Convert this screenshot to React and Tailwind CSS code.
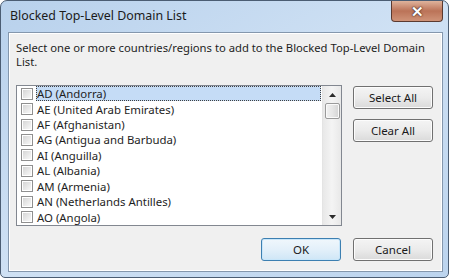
import React from "react";

const countries = [
  "AD (Andorra)",
  "AE (United Arab Emirates)",
  "AF (Afghanistan)",
  "AG (Antigua and Barbuda)",
  "AI (Anguilla)",
  "AL (Albania)",
  "AM (Armenia)",
  "AN (Netherlands Antilles)",
  "AO (Angola)",
];

const Checkbox = () => (
  <div className="w-[12px] h-[12px] border border-[#8f8f8f] bg-white p-[1px] shrink-0">
    <div className="w-full h-full bg-gradient-to-br from-[#d6d6d6] to-[#f8f8f8]" />
  </div>
);

const Button = ({ children, primary }) => (
  <button
    className={
      primary
        ? "w-[80px] h-[23px] rounded-[3px] border border-[#3c7fb1] bg-gradient-to-b from-[#f0f7fc] via-[#e3f0fa] to-[#cfe6f6] text-[11.5px] text-[#1a1a1a] shadow-[inset_0_0_0_1px_#c8e6fa]"
        : "w-[80px] h-[23px] rounded-[3px] border border-[#707070] bg-gradient-to-b from-[#f4f4f4] via-[#ebebeb] to-[#dadada] text-[11.5px] text-[#1a1a1a] shadow-[inset_0_0_0_1px_#fcfcfc]"
    }
  >
    {children}
  </button>
);

export default function App() {
  return (
    <div className="w-[450px] h-[278px] bg-white" style={{ fontFamily: '"Noto Sans", "Open Sans", sans-serif' }}>
      <div className="w-[449px] h-[278px] rounded-t-[7px] rounded-b-[5px] border border-[#4b5d73] bg-gradient-to-br from-[#b8d1ec] via-[#cfe1f4] to-[#bcd4ee] flex flex-col">
        {/* title bar */}
        <div className="h-[31px] flex items-start justify-between shrink-0">
          <div className="pl-[9px] pt-[7px] text-[12.4px] text-[#1b1b1b] leading-[16px]">Blocked Top-Level Domain List</div>
          <div className="mr-[5px] w-[52px] h-[21px] rounded-b-[4px] border border-t-0 border-[#5b3a30] bg-gradient-to-b from-[#dfb39c] via-[#bb7358] to-[#cf9378] flex items-center justify-center">
            <span className="text-white text-[15px] font-bold leading-none [text-shadow:0_0_2px_#3b2018,0_0_1px_#3b2018]">✕</span>
          </div>
        </div>

        {/* client area */}
        <div className="ml-[7px] mr-[5px] h-[240px] border border-[#8497ad] bg-[#f0f0f0] shadow-[inset_0_0_0_1px_#ffffff] flex flex-col pl-[7px] pr-[9px] pt-[8px]">
          <p className="text-[11.25px] leading-[14px] text-[#1e1e1e] pr-[6px]">
            Select one or more countries/regions to add to the Blocked Top-Level Domain List.
          </p>

          <div className="mt-[16px] flex gap-[11px]">
            {/* list */}
            <div className="w-[326px] h-[141px] border border-[#828790] bg-white flex">
              <div className="flex-1 flex flex-col">
                {countries.map((c, i) => (
                  <div key={c} className="h-[15.5px] flex items-center pl-[4px]">
                    <Checkbox />
                    <div
                      className={
                        i === 0
                          ? "ml-[3px] flex-1 h-[15px] flex items-center pl-[1px] bg-[#c5dcf6] outline outline-1 outline-dotted outline-[#404040] -outline-offset-1 text-[11.4px] text-[#1e1e1e]"
                          : "ml-[3px] flex-1 h-[15px] flex items-center pl-[1px] text-[11.4px] text-[#1e1e1e]"
                      }
                    >
                      {c}
                    </div>
                  </div>
                ))}
              </div>
              {/* scrollbar */}
              <div className="w-[19px] h-full ml-[1px] bg-gradient-to-r from-[#e8e8e8] via-[#f4f4f4] to-[#e8e8e8] border-l border-[#e4e4e4] flex flex-col items-center">
                <div className="h-[17px] w-full flex items-center justify-center">
                  <svg width="7" height="4" viewBox="0 0 7 4"><path d="M0 4 L3.5 0 L7 4 Z" fill="#2b2b2b" /></svg>
                </div>
                <div className="w-[15px] h-[16px] rounded-[2px] border border-[#9a9a9a] bg-gradient-to-r from-[#f2f2f2] via-[#e6e6e6] to-[#d4d4d4] shadow-[inset_0_0_0_1px_#fafafa]" />
                <div className="flex-1" />
                <div className="h-[17px] w-full flex items-center justify-center">
                  <svg width="7" height="4" viewBox="0 0 7 4"><path d="M0 0 L3.5 4 L7 0 Z" fill="#2b2b2b" /></svg>
                </div>
              </div>
            </div>

            {/* side buttons */}
            <div className="flex flex-col gap-[10px] pt-[1px]">
              <Button>Select All</Button>
              <Button>Clear All</Button>
            </div>
          </div>

          <div className="mt-[12px] flex justify-end gap-[12px]">
            <Button primary>OK</Button>
            <Button>Cancel</Button>
          </div>
        </div>
      </div>
    </div>
  );
}
